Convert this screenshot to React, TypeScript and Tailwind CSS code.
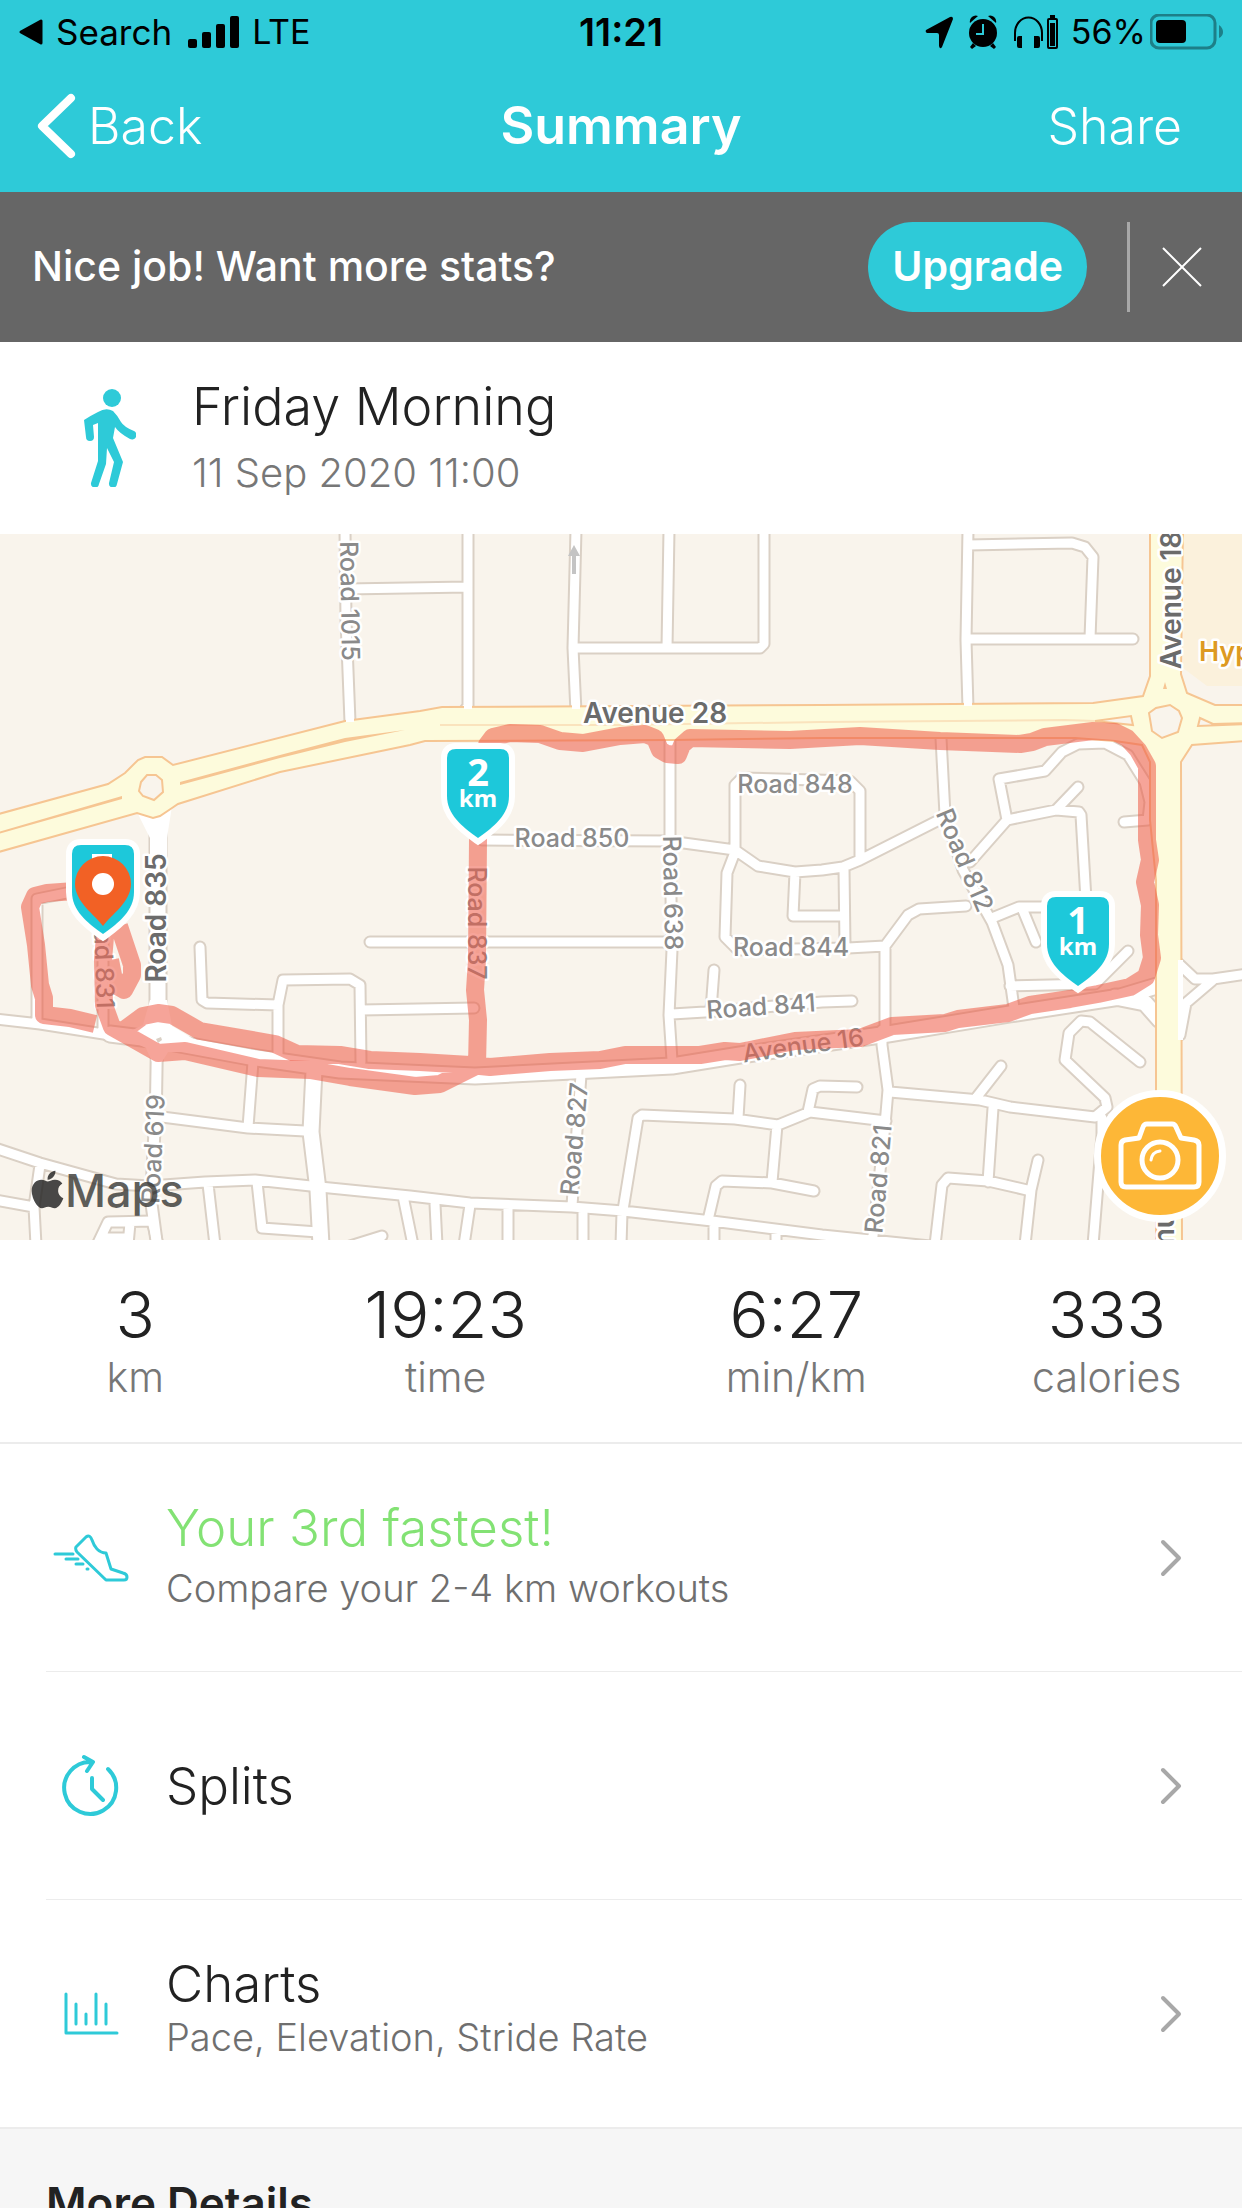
import type { ReactNode } from "react";
import { FaApple } from "react-icons/fa";

const STATS = [
  { value: "3", label: "km" },
  { value: "19:23", label: "time" },
  { value: "6:27", label: "min/km" },
  { value: "333", label: "calories" },
];

// Map drawings share one coordinate space: x 0..1242, y 534..1240.
const ROADS = [
  // north blocks
  "M345 530L346 620L350 722",
  "M346 589L468 587",
  "M468 530V706L462 714",
  "M576 530L573 648L576 712",
  "M573 648H760L764 644V530",
  "M669 530L667 648",
  "M968 530L966 640L968 708",
  "M968 545L1072 543L1085 547L1093 557L1090 638",
  "M966 639H1133",
  // centre blocks
  "M482 840L669 841L735 850L758 866L795 872L822 870L843 867L860 860L945 817",
  "M735 850V785L742 778L850 781L860 791V858",
  "M670 742V845L672 950L669 1015L672 1060",
  "M735 852L727 873L725 937L738 950L848 948L885 946",
  "M795 872L793 916H843",
  "M844 868L845 946",
  "M885 1030V946L908 915L919 909L966 906",
  "M882 1030V1045L888 1090L885 1125L872 1245",
  "M941 738L945 815L963 870L992 922L1008 965L1014 1008",
  "M970 862L1007 820L1056 810L1079 812L1081 815L1086 900",
  "M1056 810L1078 787",
  "M1007 820L999 779L1045 771L1062 752L1078 744L1105 743L1128 755L1145 782L1150 802L1148 820L1124 822",
  "M992 918L1019 907H1052",
  "M1022 908L1036 942",
  "M1010 986L1095 984L1128 951",
  "M672 1014L705 1012L822 1002L852 1001",
  "M714 970L711 1010",
  "M370 942H670",
  // west blocks
  "M200 947L202 1000L207 1003L278 1005",
  "M278 1055V1005L283 980L350 979L360 985L361 1062",
  "M361 1010L474 1008",
  "M-5 1019L40 1024L110 1035",
  "M76 891L37 899V1022",
  "M103 910V1030",
  // south blocks
  "M162 1117L248 1128L305 1131",
  "M253 1062L248 1127",
  "M-5 1148L40 1163L116 1184L150 1186L205 1182L255 1180L320 1187L410 1196L470 1203L572 1207L623 1211L712 1221L822 1235L930 1246",
  "M-5 1200L34 1207",
  "M40 1165L34 1207L36 1245",
  "M208 1184L215 1245",
  "M257 1182L262 1228L318 1232",
  "M403 1196L413 1245",
  "M97 1245L108 1222L152 1221L158 1245",
  "M130 1223L128 1245",
  "M108 1238H128",
  "M350 1246L382 1236",
  "M435 1204L437 1245",
  "M470 1205L464 1245",
  "M508 1205V1245",
  "M583 1208V1245",
  "M622 1212L621 1245",
  "M714 1222V1245",
  "M776 1230V1245",
  "M581 1075L577 1130L572 1206",
  "M623 1210L638 1118L642 1115L735 1119L778 1125L810 1112L886 1121",
  "M740 1085L738 1118",
  "M777 1125L772 1182",
  "M708 1220L716 1186L722 1181L772 1183L814 1191",
  "M808 1112L813 1089L820 1086L857 1087",
  "M890 1092L980 1100L1010 1107L1095 1117L1107 1107L1105 1098L1065 1060L1069 1033L1081 1021L1090 1022L1140 1062",
  "M976 1098L1001 1066",
  "M993 1108L988 1182",
  "M935 1245L942 1185L948 1178L988 1181L1027 1190",
  "M1038 1160L1031 1190L1025 1245",
  "M1102 1118V1135L1093 1245",
  // east junction
  "M1178 963L1195 979H1213L1247 974",
  "M1213 980L1186 1003L1180 1035",
];

const WIDE_ROADS = [
  "M158 806V1040",
  "M314 1070L311 1132L318 1190L321 1245",
  "M110 1034L158 1040L250 1057L340 1070L475 1076L672 1066L740 1055L888 1034L1010 1014L1120 997L1160 985",
  "M1115 997L1145 1003L1160 1020",
];

const AVENUES =
  "M-5 815L108 784L125 773L138 760L145 757H162L173 765L345 721L420 711L442 707L822 705L1093 703L1143 696L1150 676V530H1183L1181 674L1187 693L1215 705H1247V741L1192 745L1181 762L1182 1245H1156V880L1150 820V762L1142 745L1115 741L1075 738H822L672 740L425 741L410 745L280 772L178 804L172 808L160 816L153 818L137 813L-5 853Z";

const ROUTE =
  "M95 895L75 891L47 893L35 896L30 907L36 945L40 985L44 998V1015L70 1018L95 1024M106 925L103 960L104 1005L112 1027L158 1053L185 1051L258 1068L310 1070L350 1077L415 1086L440 1084L478 1065M124 1030L143 1016L158 1013L172 1015L200 1031L275 1044L297 1054L340 1055L370 1060L420 1062L470 1065L490 1067L550 1062L600 1060L625 1055H700L725 1051L740 1052L795 1041L860 1038L892 1026L945 1023L958 1019L1008 1013L1030 1005L1070 999L1098 994L1130 987L1146 977L1152 958L1149 935L1150 905L1145 882L1150 860L1147 840V766L1138 750L1127 738L1115 732L1093 731L1045 737L1032 742L1020 744L940 741L860 736L790 740L690 738L682 745L678 755L667 754L660 750L655 738L645 734L620 736L583 743L560 741L540 734L510 733L493 737L487 745L480 780L478 840L477 960L475 990L478 1020L477 1065M119 926L132 965V975L124 990L115 985L110 960";

type RoadLabel = { text: string; x: number; y: number; angle: number; major?: boolean };

const LABELS: RoadLabel[] = [
  { text: "Road 1015", x: 350, y: 601, angle: 89 },
  { text: "Road 831", x: 104, y: 954, angle: 88 },
  { text: "Road 837", x: 477, y: 923, angle: 90 },
  { text: "Road 638", x: 673, y: 893, angle: 89 },
  { text: "Road 850", x: 572, y: 838, angle: 0 },
  { text: "Road 848", x: 795, y: 784, angle: 0 },
  { text: "Road 844", x: 791, y: 947, angle: 0 },
  { text: "Road 841", x: 761, y: 1006, angle: -4 },
  { text: "Road 812", x: 965, y: 860, angle: 67 },
  { text: "Avenue 16", x: 803, y: 1045, angle: -8 },
  { text: "Road 827", x: 574, y: 1139, angle: -85 },
  { text: "Road 821", x: 878, y: 1179, angle: -85 },
  { text: "Road 619", x: 153, y: 1149, angle: -87 },
  { text: "Avenue 28", x: 655, y: 714, angle: 0, major: true },
  { text: "Road 835", x: 157, y: 918, angle: -90, major: true },
  { text: "Avenue 18", x: 1172, y: 600, angle: -90, major: true },
  { text: "Avenue 18", x: 1165, y: 1227, angle: -90, major: true },
];

function KmPin({ x, y, value }: { x: number; y: number; value?: string }) {
  return (
    <g transform={`translate(${x} ${y})`}>
      <path
        d="M-22 0H22Q31 0 31 9V47C31 65 17 77 0 89C-17 77 -31 65 -31 47V9Q-31 0 -22 0Z"
        fill="#1dc8da"
        stroke="#fff"
        strokeWidth="12"
        paintOrder="stroke"
      />
      {value && (
        <g fill="#fff" textAnchor="middle" className="font-['Noto_Sans','Open_Sans',sans-serif] font-bold">
          <text y="37" fontSize="38">
            {value}
          </text>
          <text y="58" fontSize="24">
            km
          </text>
        </g>
      )}
    </g>
  );
}

function RouteMap() {
  return (
    <svg viewBox="0 534 1242 706" className="block h-auto w-full" role="img" aria-label="Route map">
      <rect y="534" width="1242" height="706" fill="#f9f4ec" />
      <path d="M1184 530H1247V686H1207L1183 668Z" fill="#fbf1dc" />

      <g fill="none" strokeLinecap="round" strokeLinejoin="round">
        <g stroke="#dad0c5">
          <path d={ROADS.join("")} strokeWidth="13" />
          <path d={WIDE_ROADS.join("")} strokeWidth="19" />
          <path d="M157 1040L156 1100L151 1200L157 1245" strokeWidth="14" />
        </g>
        <g stroke="#fff">
          <path d={ROADS.join("")} strokeWidth="9" />
          <path d={WIDE_ROADS.join("")} strokeWidth="15" />
          <path d="M157 1040L156 1100L151 1200L157 1245" strokeWidth="10" />
        </g>
      </g>
      <path
        d="M137 812L150 838V860H167V838L172 806ZM150 1000L143 1025L120 1036L146 1048L152 1062H162L168 1052L215 1052L172 1026L167 1000Z"
        fill="#fff"
      />
      <path d="M156 1039L161 1037L162 1040L158 1043Z" fill="#dad0c5" />

      <path d={AVENUES} fill="#fdfbdc" stroke="#f6c592" strokeWidth="2" />
      <g fill="#f9f4ec" stroke="#f6c592" strokeWidth="2">
        <path d="M147 775H156L162 780L163 792L154 800L143 796L139 791L141 782Z" />
        <path d="M1149 713L1156 708L1170 705L1179 711L1182 718L1178 732L1162 738L1152 731Z" />
        <path d="M1095 721L1131 716L1133 725Z" />
        <path d="M1247 723L1213 724L1200 718L1198 726L1247 724Z" />
      </g>
      <path d="M-5 833L122 796V799L-5 835ZM180 782L280 755L345 738L405 730L345 742L280 758L180 785ZM1163 689L1165 682L1167 689Z" fill="#f6c592" />
      <path d="M440 725H620L822 722L1065 720L1095 721" fill="none" stroke="#fae3bd" strokeWidth="2" />
      {/* side streets opening onto the avenue */}
      <path d="M346 714H354V722H346ZM464 702H472V709H464ZM572 702H580V709H572ZM964 700H972V706H964Z" fill="#fff" />
      <path d="M1183 960V1040L1178 1040V960Z" fill="#fff" />

      <g textAnchor="middle" stroke="#fff" strokeWidth="5" strokeLinejoin="round" paintOrder="stroke" className="font-[Inter,sans-serif]">
        {LABELS.map((label, i) => (
          <text
            key={i}
            transform={`translate(${label.x} ${label.y}) rotate(${label.angle})`}
            y="9"
            fontSize={label.major ? 28 : 25}
            fontWeight={label.major ? 600 : 500}
            fill={label.major ? "#6b6b6b" : "#8a8a8a"}
          >
            {label.text}
          </text>
        ))}
        <text x="1199" y="661" fontSize="27" fontWeight="600" textAnchor="start" fill="#dd9a22">
          Hyp
        </text>
      </g>

      <path d="M574 574V552" stroke="#c4c4c4" strokeWidth="4" />
      <path d="M568 556L574 545L580 556Z" fill="#c4c4c4" />

      <path
        d={ROUTE}
        fill="none"
        stroke="#ee5a46"
        strokeOpacity=".55"
        strokeWidth="18"
        strokeLinejoin="round"
      />

      <KmPin x={478} y={749} value="2" />
      <KmPin x={1078} y={897} value="1" />
      <KmPin x={103} y={845} />
      <path d="M92 854H112V860H92Z" fill="#fff" />
      <path d="M103 926C95 915 75 902 75 884A28 28 0 0 1 131 884C131 902 111 915 103 926Z" fill="#f26125" />
      <circle cx="103" cy="884" r="11" fill="#fff" />

      <g fill="#3c3c3a" opacity=".82">
        <FaApple x="26" y="1168" size={43} />
        <text x="65" y="1207" fontSize="45" fontWeight="500" className="font-[Inter,sans-serif]">
          Maps
        </text>
      </g>
    </svg>
  );
}

function StatusBar() {
  return (
    <div className="grid grid-cols-[1fr_auto_1fr] items-center px-[18px] pt-2 text-[35px] leading-[48px] text-black">
      <div className="flex items-center gap-3">
        <svg width="26" height="28" viewBox="0 0 26 28" aria-hidden="true">
          <path d="M3 14L23 3V25Z" fill="currentColor" stroke="currentColor" strokeWidth="3" strokeLinejoin="round" />
        </svg>
        <span>Search</span>
        <svg width="52" height="34" viewBox="0 0 52 34" fill="currentColor" className="ml-1" aria-hidden="true">
          <rect y="24" width="9" height="9" rx="2" />
          <rect x="14" y="17" width="9" height="16" rx="2" />
          <rect x="28" y="9" width="9" height="24" rx="2" />
          <rect x="42" y="1" width="9" height="32" rx="2" />
        </svg>
        <span className="text-[34px]">LTE</span>
      </div>
      <span className="text-[38px] font-semibold">11:21</span>
      <div className="flex items-center justify-end">
        <svg width="28" height="33" viewBox="0 0 28 33" className="mr-4" aria-hidden="true">
          <path d="M1 14Q0 16 2 17H12Q14 17 14 19V30Q15 34 17 31L28 3Q28 0 25 1Z" fill="currentColor" />
        </svg>
        <svg width="28" height="35" viewBox="0 0 28 35" className="mr-4" aria-hidden="true">
          <g fill="currentColor">
            <path d="M1 8A6 6 0 0 1 9 1ZM27 8A6 6 0 0 0 19 1Z" />
            <ellipse cx="14" cy="18" rx="14" ry="14" />
            <path d="M4 28L7 31L3 34L1 32ZM24 28L21 31L25 34L27 32Z" />
          </g>
          <path d="M14 9V19H7" fill="none" stroke="#2ecad8" strokeWidth="2" />
        </svg>
        <svg width="46" height="34" viewBox="0 0 46 34" className="mr-3" aria-hidden="true">
          <path d="M2 26V18A13 15 0 0 1 29 18V26" fill="none" stroke="currentColor" strokeWidth="2" />
          <path d="M4 23Q4 21 6 21H9V33H6Q4 33 4 31ZM27 23Q27 21 25 21H21V33H25Q27 33 27 31Z" fill="currentColor" />
          <rect x="35" y="4" width="9" height="29" rx="1" fill="none" stroke="currentColor" strokeWidth="2" />
          <path d="M37 0H42V3H37ZM37 8H42V31H37Z" fill="currentColor" />
        </svg>
        <span className="mr-1 text-[34px]">56%</span>
        <svg width="74" height="36" viewBox="0 0 74 36" aria-hidden="true">
          <rect x="1" y="1" width="64" height="33" rx="8" fill="none" stroke="#1d7f88" strokeWidth="3" />
          <rect x="6" y="6" width="30" height="23" rx="4" fill="currentColor" />
          <path d="M69 11Q73 14 73 18T69 24Z" fill="#1d7f88" />
        </svg>
      </div>
    </div>
  );
}

function WalkerIcon() {
  return (
    <svg width="52" height="98" viewBox="0 0 52 98" className="shrink-0" aria-hidden="true">
      <g fill="#2ecad8">
        <ellipse cx="28" cy="9" rx="9" ry="9" />
        <path d="M14 23Q22 18 29 22Q34 27 37 33Q40 38 50 42A4 4 0 0 1 46 50Q35 44 31 38L29 49L39 73L33 95A4 4 0 0 1 25 94L30 73L23 59L22 75L15 95A4 4 0 0 1 7 94L14 72V34L9 36L10 48A4 4 0 0 1 2 48L0 31Q6 27 14 23Z" />
      </g>
    </svg>
  );
}

function ShoeIcon() {
  return (
    <svg width="76" height="48" viewBox="0 0 76 48" fill="none" stroke="#2ecad8" strokeWidth="3" strokeLinecap="round" strokeLinejoin="round" aria-hidden="true">
      <path d="M23 13L33 3Q37 0 39 6Q41 12 44 15Q48 19 53 19L58 35L70 39Q74 40 74 43Q74 46 71 46H53L24 18Q22 15 23 13Z" />
      <path d="M2 20H20M13 25H25M23 30H30M34 35H35" />
    </svg>
  );
}

function SplitsIcon() {
  return (
    <svg width="60" height="64" viewBox="0 0 60 64" fill="none" stroke="#2ecad8" strokeWidth="4" strokeLinecap="round" strokeLinejoin="round" aria-hidden="true">
      <path d="M47 15A26 26 0 1 1 31 8M23 3L32 8L26 17M31 24V35L42 46" />
    </svg>
  );
}

function ChartsIcon() {
  return (
    <svg width="56" height="44" viewBox="0 0 56 44" fill="none" stroke="#2ecad8" strokeWidth="3" strokeLinecap="round" strokeLinejoin="round" aria-hidden="true">
      <path d="M3 2V41H54M13 12V32M23 22V32M33 2V32M43 12V32" />
    </svg>
  );
}

type DetailRowProps = { icon: ReactNode; title: string; subtitle?: string; highlight?: boolean; tight?: boolean };

function DetailRow({ icon, title, subtitle, highlight, tight }: DetailRowProps) {
  return (
    <a href="#details" className="flex h-[227px] items-center pl-[52px]">
      <span className="flex w-[78px] shrink-0 justify-center">{icon}</span>
      <span className="ml-9 flex-1">
        <span className={`block text-[51px] font-light ${tight ? "leading-[46px]" : "leading-[60px]"} ${highlight ? "text-[#83e274]" : "text-[#222]"}`}>
          {title}
        </span>
        {subtitle && <span className="block text-[38px] leading-[60px] font-light text-[#6f6f6f]">{subtitle}</span>}
      </span>
      <svg width="24" height="38" viewBox="0 0 24 38" className="mr-[58px]" aria-hidden="true">
        <path d="M3 3L19 19L3 35" fill="none" stroke="#a8a8a8" strokeWidth="4" strokeLinecap="round" strokeLinejoin="round" />
      </svg>
    </a>
  );
}

export default function App() {
  return (
    <div className="h-screen overflow-hidden bg-white font-[Inter,sans-serif] text-[#222]">
      <header className="bg-[#2ecad8] text-white">
        <StatusBar />
        <div className="grid h-[136px] grid-cols-[1fr_auto_1fr] items-center px-9 pt-1 text-[50px]">
          <a href="#back" className="flex items-center gap-3 font-light">
            <svg width="40" height="66" viewBox="0 0 40 66" aria-hidden="true">
              <path d="M35 5L6 33L35 61" fill="none" stroke="#fff" strokeWidth="8" strokeLinecap="round" strokeLinejoin="round" />
            </svg>
            Back
          </a>
          <h1 className="text-[52px] font-semibold">Summary</h1>
          <button type="button" className="mr-6 justify-self-end font-light">
            Share
          </button>
        </div>
      </header>

      <section className="flex h-[150px] items-center bg-[#666] pr-10 pl-8 text-[41px] text-white">
        <p className="flex-1 font-medium">Nice job! Want more stats?</p>
        <button type="button" className="h-[90px] rounded-full bg-[#2ecad8] px-6 font-semibold">
          Upgrade
        </button>
        <span className="mr-8 ml-10 h-[90px] w-[3px] bg-[#a8a8a8]" />
        <button type="button" aria-label="Dismiss">
          <svg width="40" height="40" viewBox="0 0 40 40" aria-hidden="true">
            <path d="M1 1L39 39M39 1L1 39" stroke="#fff" strokeWidth="2" />
          </svg>
        </button>
      </section>

      <section className="flex h-[192px] items-center pl-[84px]">
        <WalkerIcon />
        <div className="ml-14">
          <h2 className="text-[52px] leading-[70px] font-light">Friday Morning</h2>
          <p className="text-[40px] leading-[62px] font-light text-[#777]">11 Sep 2020 11:00</p>
        </div>
      </section>

      <section className="relative">
        <RouteMap />
        <button
          type="button"
          aria-label="Add photo"
          className="absolute right-4 bottom-[18px] flex size-[132px] items-center justify-center rounded-full border-[7px] border-white bg-[#fdb737]"
        >
          <svg width="84" height="70" viewBox="0 0 84 70" fill="none" stroke="#fff" strokeWidth="5" strokeLinejoin="round" strokeLinecap="round" aria-hidden="true">
            <path d="M7 19L21 17L25 6Q26 3 29 3H54Q57 3 58 6L63 17L76 19Q81 20 81 24V61Q81 66 76 66H8Q3 66 3 61V24Q3 20 7 19Z" />
            <circle cx="42" cy="39" r="18" />
            <path d="M33 39Q34 31 42 30" strokeWidth="3" />
          </svg>
        </button>
      </section>

      <dl className="grid h-[204px] grid-cols-[27fr_35fr_35fr_27fr] border-b-2 border-[#ececec] pt-9 text-center">
        {STATS.map((stat) => (
          <div key={stat.label} className="flex flex-col-reverse justify-end">
            <dt className="text-[41px] leading-[46px] font-light text-[#777]">{stat.label}</dt>
            <dd className="text-[65px] leading-[78px] font-light">{stat.value}</dd>
          </div>
        ))}
      </dl>

      <nav>
        <DetailRow icon={<ShoeIcon />} title="Your 3rd fastest!" subtitle="Compare your 2-4 km workouts" highlight />
        <hr className="ml-[46px] border-[#ececec]" />
        <DetailRow icon={<SplitsIcon />} title="Splits" />
        <hr className="ml-[46px] border-[#ececec]" />
        <DetailRow icon={<ChartsIcon />} title="Charts" subtitle="Pace, Elevation, Stride Rate" tight />
      </nav>

      <section className="border-t-2 border-[#ececec] bg-[#f6f6f6] px-[46px] pt-[46px] pb-16">
        <h2 className="text-[44px] leading-[56px] font-semibold">More Details</h2>
      </section>
    </div>
  );
}
